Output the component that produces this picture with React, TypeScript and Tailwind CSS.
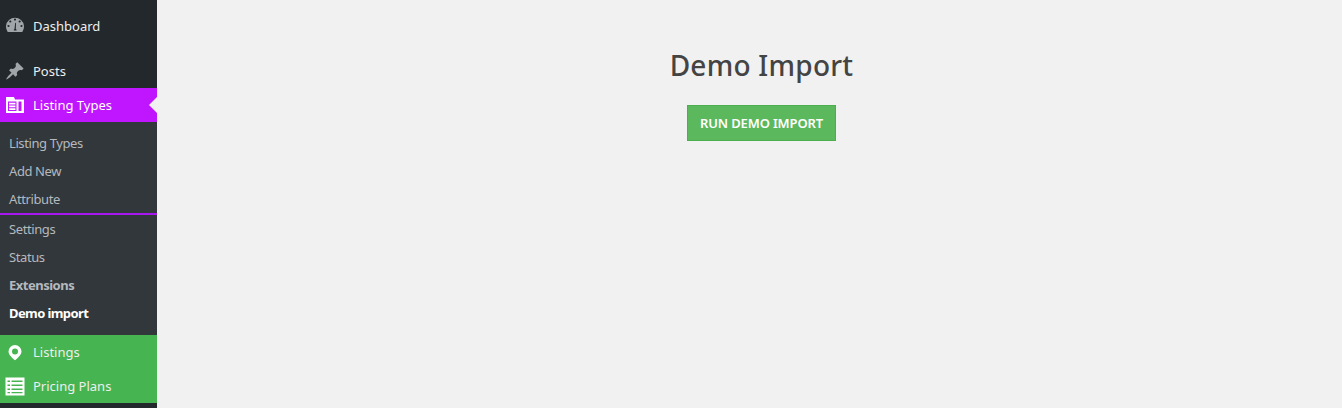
const font = "font-['Noto_Sans','Open_Sans',sans-serif]";

function Gauge() {
  return (
    <svg width="20" height="20" viewBox="0 0 20 20" className="fill-[#a0a5aa]">
      <path d="M2.700 16A9 9 0 1 1 17.300 16z" />
      <g className="fill-[#23282d]">
        <circle cx="10" cy="3.600" r="1.100" />
        <circle cx="5.300" cy="5.500" r="1.100" />
        <circle cx="14.700" cy="5.500" r="1.100" />
        <circle cx="3.500" cy="10" r="1.100" />
        <circle cx="16.500" cy="10" r="1.100" />
        <path d="M8.800 14.500c0-.7.200-1.200.7-1.500l.7-6.200.8.100-.2 6.100c.5.300.8.800.8 1.500z" />
      </g>
    </svg>
  );
}

function Pin() {
  return (
    <svg width="20" height="20" viewBox="0 0 20 20" className="fill-[#a0a5aa]">
      <path d="M10.440 3.020l1.820-1.820 6.360 6.350-1.830 1.820c-1.050-.68-2.480-.57-3.410.36l-.75.75c-.92.93-1.040 2.350-.35 3.410l-1.830 1.820-2.410-2.410-2.800 2.790c-.42.420-3.380 2.710-3.800 2.290s1.860-3.390 2.280-3.810l2.790-2.790L4.100 9.360l1.830-1.820c1.050.690 2.480.570 3.410-.360l.750-.750c.930-.920 1.040-2.350.360-3.410z" />
    </svg>
  );
}

function Columns() {
  return (
    <svg width="20" height="20" viewBox="0 0 20 20" className="fill-white">
      <path fillRule="evenodd" d="M1 2h8l1 2.500h9V18H1zM3 6.500v9.500h8.500V6.500zM13.500 6.500V16H16.500V6.500z" />
      <path d="M4 7.800h6.500v1.800H4zM4 10.500h6.500v1.800H4zM4 13.200h6.500V15H4z" />
    </svg>
  );
}

function Marker() {
  return (
    <svg width="20" height="20" viewBox="0 0 20 20" className="fill-white">
      <path fillRule="evenodd" d="M10 3a6.500 6.500 0 0 0-6.500 6.500c0 3.200 3.900 6.700 6.500 8.800 2.600-2.100 6.500-5.600 6.500-8.800A6.500 6.500 0 0 0 10 3zm0 3.500a3 3 0 1 1 0 6 3 3 0 0 1 0-6z" />
    </svg>
  );
}

function Table() {
  return (
    <svg width="20" height="20" viewBox="0 0 20 20" className="fill-white">
      <path fillRule="evenodd" d="M0.500 1.500h19v18h-19zM2.500 4.500v1.500h2.500V4.500zM6.500 4.500v1.500h11V4.500zM2.500 8.500v1.500h2.500V8.500zM6.500 8.500v1.500h11V8.500zM2.500 12.500v1.500h2.500v-1.500zM6.500 12.500v1.500h11v-1.500zM2.500 16v1.200h2.500V16zM6.500 16v1.200h11V16z" />
    </svg>
  );
}

function MenuRow({ icon, label, className = "", text = "text-[#eeeeee]", children }: { icon: React.ReactNode; label: string; className?: string; text?: string; children?: React.ReactNode }) {
  return (
    <div className={`relative flex h-[34px] items-center ${className}`}>
      <div className="flex w-[33px] shrink-0 items-center pl-[5px]">{icon}</div>
      <span className={`pt-0.5 text-[13px] ${text}`}>{label}</span>
      {children}
    </div>
  );
}

function SubItem({ label, className = "font-normal tracking-[-0.4px] text-[#b4b9be]" }: { label: string; className?: string }) {
  return (
    <div className={`flex h-7 items-center pl-[9px] pt-0.5 text-[13px] ${className}`}>{label}</div>
  );
}

export default function App() {
  return (
    <div className={`flex h-[408px] w-[1342px] overflow-hidden bg-[#f1f1f1] ${font}`}>
      <aside className="flex h-full w-[157px] shrink-0 flex-col bg-[#23282d] pt-[9px]">
        <MenuRow icon={<Gauge />} label="Dashboard" className="mb-[11px]" />
        <MenuRow icon={<Pin />} label="Posts" />
        <MenuRow icon={<Columns />} label="Listing Types" className="bg-[#bf16ff]" text="text-white">
          <div className="absolute right-0 top-1/2 h-0 w-0 -translate-y-1/2 border-y-[8px] border-r-[8px] border-y-transparent border-r-[#f1f1f1]" />
        </MenuRow>
        <div className="flex flex-col bg-[#32373c] pb-2 pt-[7px]">
          <SubItem label="Listing Types" />
          <SubItem label="Add New" />
          <SubItem label="Attribute" />
          <div className="h-0.5 bg-[#a816f0]" />
          <SubItem label="Settings" />
          <SubItem label="Status" />
          <SubItem label="Extensions" className="font-bold tracking-[-0.5px] text-[#b4b9be]" />
          <SubItem label="Demo import" className="font-bold tracking-[-0.6px] text-white" />
        </div>
        <MenuRow icon={<Marker />} label="Listings" className="bg-[#46b450]" />
        <MenuRow icon={<Table />} label="Pricing Plans" className="bg-[#46b450]" />
      </aside>
      <main className="flex flex-1 flex-col items-center pl-6 pt-[46px]">
        <h1 className="text-[28px] font-medium leading-[38px] tracking-[0.25px] text-[#444444]">Demo Import</h1>
        <button className="mt-[21px] h-9 w-[149px] border border-[#4cae4c] bg-[#5cb85c] pt-0.5 text-[13px] font-semibold tracking-[-0.15px] text-white">RUN DEMO IMPORT</button>
      </main>
    </div>
  );
}
